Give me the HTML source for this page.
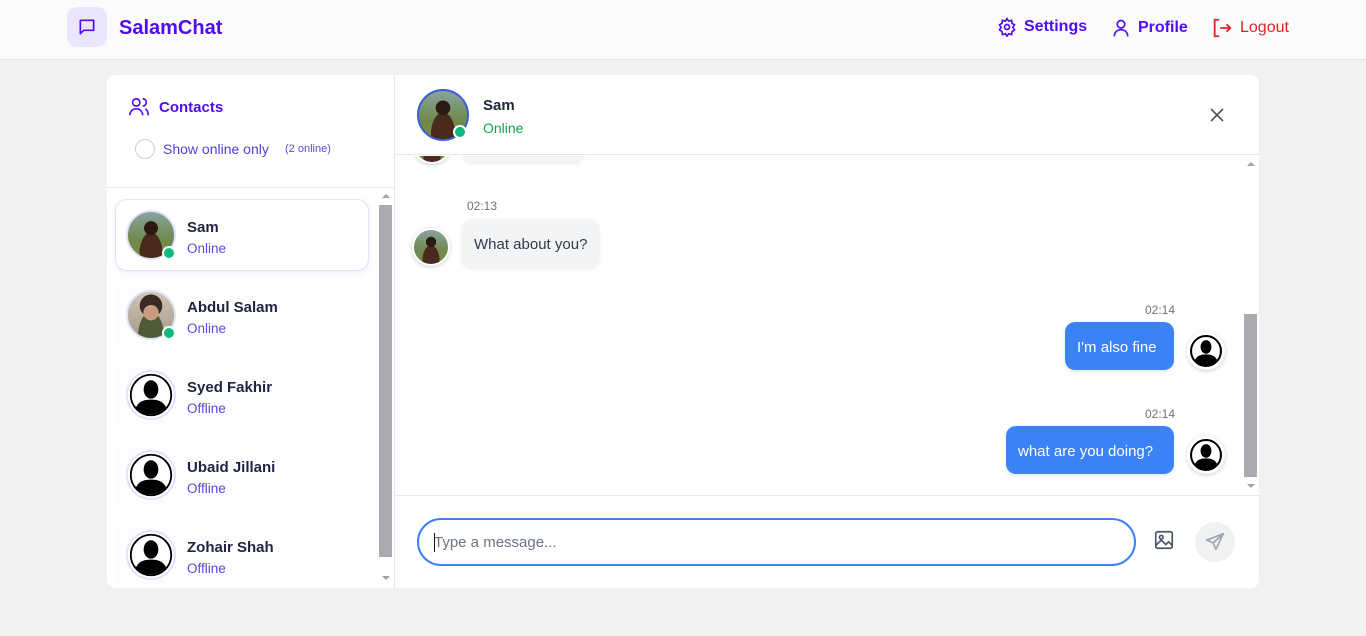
<!DOCTYPE html>
<html><head><style>
*{box-sizing:border-box;margin:0;padding:0}
body{width:1366px;height:636px;background:#f1f1f1;font-family:"Liberation Sans",sans-serif;position:relative;overflow:hidden}
.abs{position:absolute}
header{position:absolute;left:0;top:0;width:1366px;height:60px;background:#fbfbfb;border-bottom:1px solid #e4e4e4}
.nav{font-weight:bold;font-size:16px;color:#4f0ef0;display:flex;align-items:center;gap:7px}
.card{position:absolute;left:107px;top:75px;width:1152px;height:513px;background:#fff;border-radius:8px;overflow:hidden}
.side{position:absolute;left:0;top:0;width:288px;height:513px;border-right:1px solid #e5e7eb}
.item{position:absolute;left:8px;width:254px;height:72px;border-radius:12px;background:#fdfdff}
.item .nm{position:absolute;left:72px;top:20px;font-size:15px;color:#1f2340;font-weight:600}
.item .st{position:absolute;left:72px;top:42px;font-size:13.5px;color:#5b45e6}
.av{position:absolute;left:11px;top:11px;width:50px;height:50px;border-radius:50%;border:2px solid #dfe3fb}
.photo{background:radial-gradient(circle at 50% 35%,#2b1a14 0 18%,transparent 19%),radial-gradient(ellipse at 50% 90%,#4a2a1c 0 35%,transparent 36%),linear-gradient(#8aa3a0,#6f8a4c 60%,#7a8a45)}
.photo2{background:radial-gradient(circle at 50% 45%,#c99b80 0 22%,transparent 23%),radial-gradient(circle at 50% 30%,#3a2a20 0 28%,transparent 29%),radial-gradient(ellipse at 50% 100%,#4e5b3a 0 40%,transparent 41%),linear-gradient(#cfc5b8,#a59a8a)}
.dot{position:absolute;width:14px;height:14px;border-radius:50%;background:#10b981;border:2px solid #fff}
.sil{background:#fff;overflow:hidden}
.sil svg{width:100%;height:100%}
.bubL,.bubR{position:absolute;border-radius:10px;font-size:15px;padding:0 12px;height:48px;display:flex;align-items:center;padding-top:2px}
.bubL{background:#f3f4f6;color:#333a48;box-shadow:0 2px 4px rgba(0,0,0,.08)}
.bubR{background:#3b82f6;color:#fff;box-shadow:0 2px 4px rgba(0,0,0,.1)}
.tm{position:absolute;font-size:12px;color:#6b7280}
.mav{position:absolute;width:38px;height:38px;border-radius:50%;border:2px solid #fff;box-shadow:0 1px 4px rgba(0,0,0,.2)}
</style></head><body>
<header>
 <div class="abs" style="left:67px;top:7px;width:40px;height:40px;border-radius:10px;background:#ebe5fd"></div>
 <svg class="abs" style="left:77px;top:17px" width="20" height="20" viewBox="0 0 24 24" fill="none" stroke="#4f0ef0" stroke-width="2" stroke-linejoin="round"><path d="M4 4h16v12H8l-4 4z"/></svg>
 <div class="abs" style="left:119px;top:17px;font-size:20px;font-weight:bold;color:#4f0ef0">SalamChat</div>
 <div class="abs nav" style="left:997px;top:17px"><svg width="20" height="20" viewBox="0 0 24 24" fill="none" stroke="#4f0ef0" stroke-width="2"><circle cx="12" cy="12" r="3"/><path d="M12 2l2 3 3.5-1 .5 3.5 3 2-2 3 2 3-3 2-.5 3.5-3.5-1-2 3-2-3-3.5 1L6 17.5l-3-2 2-3-2-3 3-2 .5-3.5 3.5 1z"/></svg>Settings</div>
 <div class="abs nav" style="left:1111px;top:17px"><svg width="20" height="22" viewBox="0 0 24 24" fill="none" stroke="#4f0ef0" stroke-width="2"><circle cx="12" cy="7.5" r="4.5"/><path d="M4 22c0-5 3.5-8 8-8s8 3 8 8"/></svg>Profile</div>
 <div class="abs nav" style="left:1211px;top:17px;color:#dc2626;font-weight:normal"><svg width="22" height="22" viewBox="0 0 24 24" fill="none" stroke="#dc2626" stroke-width="2"><path d="M9 3H4v18h5M10 12h11M17 8l4 4-4 4"/></svg>Logout</div>
</header>
<div class="card">
 <div class="side">
  <svg class="abs" style="left:21px;top:21px" width="22" height="22" viewBox="0 0 24 24" fill="none" stroke="#4f0ef0" stroke-width="1.8"><circle cx="9" cy="7" r="4"/><path d="M2 21c0-4 3-7 7-7s7 3 7 7M16 3a4 4 0 010 8M19 14c2 1 3 4 3 7"/></svg>
  <div class="abs" style="left:52px;top:24px;font-size:15px;font-weight:bold;color:#4f0ef0">Contacts</div>
  <div class="abs" style="left:28px;top:64px;width:20px;height:20px;border:1px solid #ccc;border-radius:50%"></div>
  <div class="abs" style="left:56px;top:66px;font-size:14px;color:#4a42d6">Show online only</div>
  <div class="abs" style="left:178px;top:68px;font-size:11px;color:#5b45e6">(2 online)</div>
  <div class="abs" style="left:0;top:112px;width:288px;border-top:1px solid #e5e7f5"></div>
  <div class="item" style="top:124px;border:1px solid #dfe3fb;box-shadow:0 2px 6px rgba(90,90,230,.1);background:#fff"><div class="av photo" style="left:10px;top:10px"></div><div class="dot" style="left:46px;top:46px"></div><div class="nm" style="left:71px;top:19px">Sam</div><div class="st" style="left:71px;top:41px">Online</div></div>
  <div class="item" style="top:204px"><div class="av photo2"></div><div class="dot" style="left:47px;top:47px"></div><div class="nm">Abdul Salam</div><div class="st">Online</div></div>
  <div class="item" style="top:284px"><div class="av sil"><svg viewBox="0 0 50 50"><circle cx="25" cy="25" r="22" fill="none" stroke="#000" stroke-width="2"/><ellipse cx="25" cy="19" rx="8" ry="10"/><path d="M8 40c3-8 9-10 17-10s14 2 17 10c-4 4-10 6-17 6s-13-2-17-6z"/></svg></div><div class="nm">Syed Fakhir</div><div class="st">Offline</div></div>
  <div class="item" style="top:364px"><div class="av sil"><svg viewBox="0 0 50 50"><circle cx="25" cy="25" r="22" fill="none" stroke="#000" stroke-width="2"/><ellipse cx="25" cy="19" rx="8" ry="10"/><path d="M8 40c3-8 9-10 17-10s14 2 17 10c-4 4-10 6-17 6s-13-2-17-6z"/></svg></div><div class="nm">Ubaid Jillani</div><div class="st">Offline</div></div>
  <div class="item" style="top:444px"><div class="av sil"><svg viewBox="0 0 50 50"><circle cx="25" cy="25" r="22" fill="none" stroke="#000" stroke-width="2"/><ellipse cx="25" cy="19" rx="8" ry="10"/><path d="M8 40c3-8 9-10 17-10s14 2 17 10c-4 4-10 6-17 6s-13-2-17-6z"/></svg></div><div class="nm">Zohair Shah</div><div class="st">Offline</div></div>
  <div class="abs" style="left:272px;top:130px;width:13px;height:352px;background:#a9abb0"></div>
  <div class="abs" style="left:275px;top:119px;border:4px solid transparent;border-bottom:4px solid #a3a3a3;border-top:0"></div>
  <div class="abs" style="left:275px;top:501px;border:4px solid transparent;border-top:4px solid #a3a3a3;border-bottom:0"></div>
 </div>
 <div class="abs" style="left:288px;top:0;width:864px;height:80px;border-bottom:1px solid #e5e7eb"></div>
 <div class="abs photo" style="left:310px;top:14px;width:52px;height:52px;border-radius:50%;border:2px solid #3b5bdb"></div>
 <div class="dot" style="left:346px;top:50px"></div>
 <div class="abs" style="left:376px;top:22px;font-size:15px;color:#1f2937;font-weight:600">Sam</div>
 <div class="abs" style="left:376px;top:45px;font-size:14px;color:#16a34a">Online</div>
 <svg class="abs" style="left:1102px;top:32px" width="16" height="16" viewBox="0 0 16 16" stroke="#4b5563" stroke-width="1.6"><path d="M2 2l12 12M14 2L2 14"/></svg>
 <div class="abs" style="left:288px;top:81px;width:864px;height:339px;overflow:hidden">
  <div class="mav photo" style="left:18px;top:-30px"></div>
  <div class="bubL" style="left:67px;top:-42px;width:122px"></div>
  <div class="tm" style="left:72px;top:43px">02:13</div>
  <div class="mav photo" style="left:17px;top:72px"></div>
  <div class="bubL" style="left:67px;top:63px">What about you?</div>
  <div class="tm" style="left:750px;top:147px">02:14</div>
  <div class="bubR" style="left:670px;top:166px;width:109px">I'm also fine</div>
  <div class="mav sil" style="left:792px;top:176px"><svg viewBox="0 0 50 50"><circle cx="25" cy="25" r="22" fill="none" stroke="#000" stroke-width="3"/><ellipse cx="25" cy="19" rx="8" ry="10"/><path d="M8 40c3-8 9-10 17-10s14 2 17 10c-4 4-10 6-17 6s-13-2-17-6z"/></svg></div>
  <div class="tm" style="left:750px;top:251px">02:14</div>
  <div class="bubR" style="left:611px;top:270px;width:168px">what are you doing?</div>
  <div class="mav sil" style="left:792px;top:280px"><svg viewBox="0 0 50 50"><circle cx="25" cy="25" r="22" fill="none" stroke="#000" stroke-width="3"/><ellipse cx="25" cy="19" rx="8" ry="10"/><path d="M8 40c3-8 9-10 17-10s14 2 17 10c-4 4-10 6-17 6s-13-2-17-6z"/></svg></div>
  <div class="abs" style="left:849px;top:158px;width:13px;height:163px;background:#a9abb0"></div>
  <div class="abs" style="left:852px;top:6px;border:4px solid transparent;border-bottom:4px solid #a3a3a3;border-top:0"></div>
  <div class="abs" style="left:852px;top:328px;border:4px solid transparent;border-top:4px solid #a3a3a3;border-bottom:0"></div>
 </div>
 <div class="abs" style="left:288px;top:420px;width:864px;border-top:1px solid #e5e7eb"></div>
 <div class="abs" style="left:310px;top:443px;width:719px;height:48px;border:2px solid #3b82f6;border-radius:24px"></div>
 <div class="abs" style="left:327px;top:459px;font-size:15px;color:#6b7280">Type a message...</div>
 <div class="abs" style="left:327px;top:458px;width:1px;height:19px;background:#111"></div>
 <svg class="abs" style="left:1046px;top:454px" width="22" height="22" viewBox="0 0 24 24" fill="none" stroke="#4b5563" stroke-width="1.8"><rect x="3" y="3" width="18" height="18" rx="2"/><circle cx="9" cy="9" r="2"/><path d="M3 18l6-6 5 5 3-3 4 4"/></svg>
 <div class="abs" style="left:1088px;top:447px;width:40px;height:40px;border-radius:50%;background:#f0f1f3"></div>
 <svg class="abs" style="left:1097px;top:456px" width="22" height="22" viewBox="0 0 24 24" fill="none" stroke="#9ca3af" stroke-width="1.8" stroke-linejoin="round"><path d="M21 3L3 10l7 3 3 7zM10 13l11-10"/></svg>
</div>
</body></html>
